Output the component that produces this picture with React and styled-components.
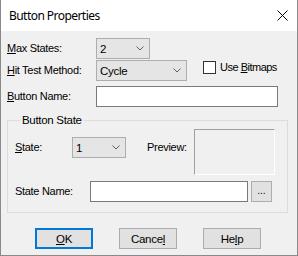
import React from "react";
import styled, { createGlobalStyle } from "styled-components";

const Global = createGlobalStyle`
  html, body { margin: 0; padding: 0; background: #ffffff; }
  * { box-sizing: border-box; }
`;

const Window = styled.div`
  width: 298px;
  height: 256px;
  display: flex;
  flex-direction: column;
  border: 1px solid #8a8a8a;
  border-top: none;
  background: #f0f0f0;
  font-family: "Liberation Sans", Arial, sans-serif;
  font-size: 11px;
  letter-spacing: -0.3px;
  color: #000;
  overflow: hidden;
`;

const TitleBar = styled.div`
  height: 31px;
  flex: none;
  background: #ffffff;
  display: flex;
  align-items: center;
  justify-content: space-between;
  padding: 0 9px 1px 8px;
`;

const Title = styled.span`
  font-family: "Noto Sans", "Open Sans", sans-serif;
  font-size: 12px;
  letter-spacing: -0.55px;
  color: #000;
`;

const Content = styled.div`
  flex: 1;
  display: flex;
  flex-direction: column;
  padding: 7px 0 0 6px;
`;

const Row = styled.div`
  display: flex;
  align-items: ${(p) => p.$align || "center"};
  margin-top: ${(p) => p.$mt || 0}px;
`;

const Label = styled.label`
  width: ${(p) => p.$w}px;
  flex: none;
  line-height: 21px;
  margin-top: ${(p) => p.$mt || 0}px;
  margin-left: ${(p) => p.$ml || 0}px;
  white-space: nowrap;
`;

const Key = styled.span`
  text-decoration: underline;
  text-underline-offset: 1px;
`;

const ComboBox = styled.div`
  width: ${(p) => p.$w}px;
  height: 21px;
  flex: none;
  margin-top: ${(p) => p.$mt || 0}px;
  border: 1px solid #adadad;
  background: #e5e5e5;
  display: flex;
  align-items: center;
  justify-content: space-between;
  padding: 0 5px 0 3px;
  font-size: 11.5px;
`;

const Chevron = () => (
  <svg width="8" height="5" viewBox="0 0 8 5">
    <polyline points="0.5,0.5 4,4 7.5,0.5" fill="none" stroke="#606060" strokeWidth="1" />
  </svg>
);

const TextInput = styled.div`
  width: ${(p) => p.$w}px;
  height: 21px;
  flex: none;
  border: 1px solid #7a7a7a;
  background: #ffffff;
`;

const CheckBox = styled.div`
  width: 13px;
  height: 13px;
  flex: none;
  border: 1px solid #333333;
  background: #ffffff;
  margin-left: 16px;
  align-self: flex-start;
  margin-top: 1px;
`;

const CheckLabel = styled.span`
  margin-left: 4px;
  align-self: flex-start;
  line-height: 15px;
  letter-spacing: -0.5px;
  white-space: nowrap;
`;

const Group = styled.fieldset`
  width: 281px;
  margin: 6px 0 0 0;
  padding: 2px 7px 10px 7px;
  border: 1px solid #dcdcdc;
  min-width: 0;
`;

const Legend = styled.legend`
  padding: 0 2px;
  margin-left: 5px;
  line-height: 14px;
  font-size: 11.5px;
`;

const Preview = styled.div`
  width: 81px;
  height: 46px;
  flex: none;
  border-top: 1px solid #a0a0a0;
  border-left: 1px solid #a0a0a0;
  border-right: 1px solid #ffffff;
  border-bottom: 1px solid #ffffff;
`;

const SmallButton = styled.div`
  width: 21px;
  height: 21px;
  flex: none;
  margin-left: 3px;
  border: 1px solid #adadad;
  background: #e1e1e1;
  display: flex;
  align-items: center;
  justify-content: center;
  padding-bottom: 3px;
  color: #222;
`;

const ButtonBar = styled.div`
  display: flex;
  gap: 26px;
  margin: 15px 0 0 28px;
`;

const Button = styled.div`
  width: 58px;
  height: 21px;
  border: ${(p) => (p.$default ? "2px solid #0078d7" : "1px solid #adadad")};
  background: #e1e1e1;
  display: flex;
  align-items: center;
  justify-content: center;
  font-size: 11.5px;
`;

const CloseIcon = () => (
  <svg width="11" height="11" viewBox="0 0 11 11">
    <path d="M0.5 0.5 L10.5 10.5 M10.5 0.5 L0.5 10.5" stroke="#000" strokeWidth="1" />
  </svg>
);

export default function App() {
  return (
    <>
      <Global />
      <Window>
        <TitleBar>
          <Title>Button Properties</Title>
          <CloseIcon />
        </TitleBar>
        <Content>
          <Row>
            <Label $w={89} $ml={0}><Key>M</Key>ax States:</Label>
            <ComboBox $w={54}><span>2</span><Chevron /></ComboBox>
          </Row>
          <Row $mt={1}>
            <Label $w={89}><Key>H</Key>it Test Method:</Label>
            <ComboBox $w={91}><span>Cycle</span><Chevron /></ComboBox>
            <CheckBox />
            <CheckLabel>Use <Key>B</Key>itmaps</CheckLabel>
          </Row>
          <Row $mt={5}>
            <Label $w={89}><Key>B</Key>utton Name:</Label>
            <TextInput $w={182} />
          </Row>
          <Group>
            <Legend>Button State</Legend>
            <Row $align="flex-start">
              <Label $w={57} $mt={8}><Key>S</Key>tate:</Label>
              <ComboBox $w={54} $mt={8}><span>1</span><Chevron /></ComboBox>
              <Label $w={47} $mt={8} $ml={21}>Preview:</Label>
              <Preview />
            </Row>
            <Row $mt={6}>
              <Label $w={75}>State Name:</Label>
              <TextInput $w={158} />
              <SmallButton>...</SmallButton>
            </Row>
          </Group>
          <ButtonBar>
            <Button $default><Key>O</Key>K</Button>
            <Button>Cance<Key>l</Key></Button>
            <Button>He<Key>l</Key>p</Button>
          </ButtonBar>
        </Content>
      </Window>
    </>
  );
}
